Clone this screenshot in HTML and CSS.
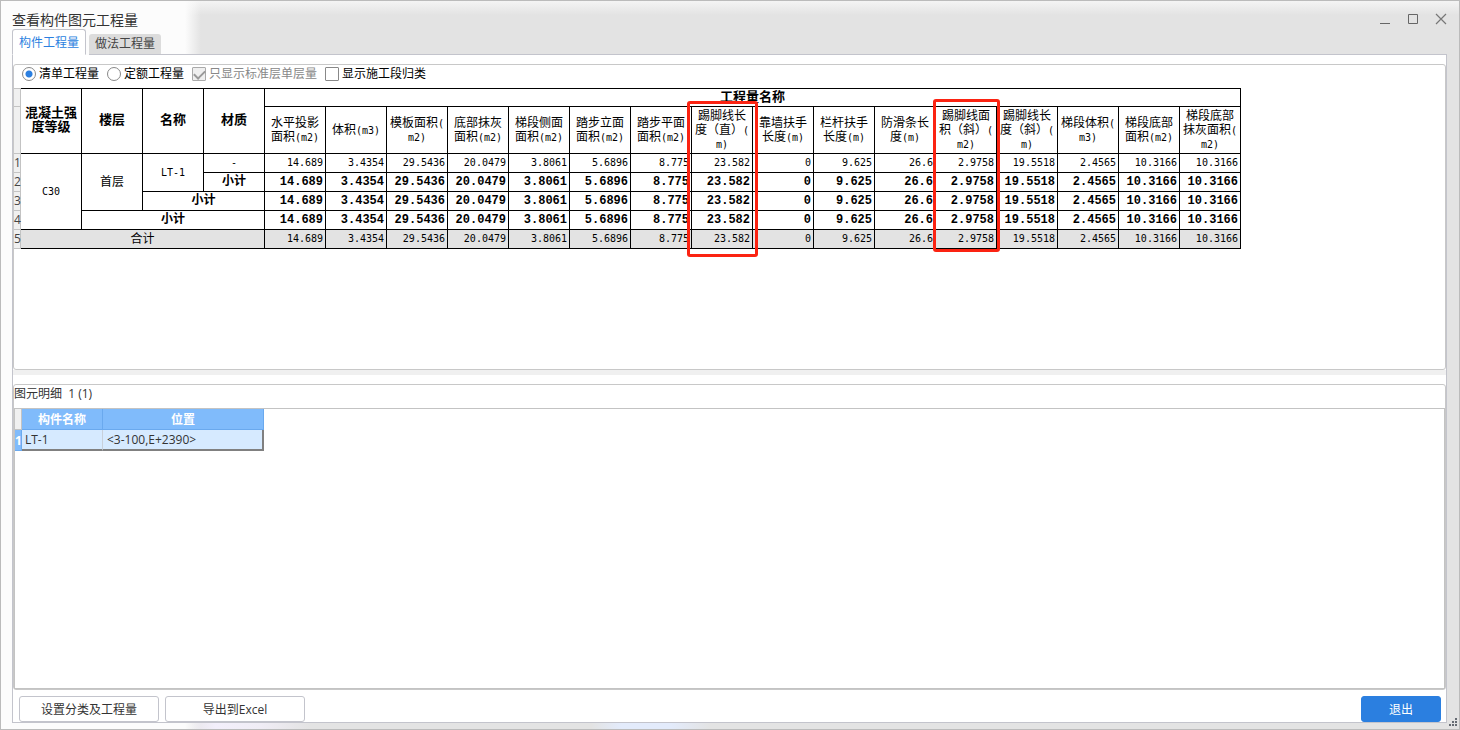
FILE: index.html
```html
<!DOCTYPE html>
<html lang="zh-CN">
<head>
<meta charset="utf-8">
<title>查看构件图元工程量</title>
<link rel="stylesheet" href="styles.css">
</head>
<body>
<div class="window">
  <header class="titlebar">
    <h1 class="title">查看构件图元工程量</h1>
    <div class="window-controls">
      <button class="control" type="button" aria-label="最小化"><svg viewBox="0 0 12 12" width="12" height="12"><path d="M1 10.500h10" fill="none" stroke="#666"/></svg></button>
      <button class="control" type="button" aria-label="最大化"><svg viewBox="0 0 12 12" width="12" height="12"><path d="M1.500 1.500h9v9h-9z" fill="none" stroke="#666"/></svg></button>
      <button class="control" type="button" aria-label="关闭"><svg viewBox="0 0 12 12" width="12" height="12"><path d="M1 1l10 10M11 1L1 11" fill="none" stroke="#777" stroke-width="1.200"/></svg></button>
    </div>
  </header>
  <nav class="tabs">
    <button class="tab tab-active" type="button">构件工程量</button>
    <button class="tab" type="button">做法工程量</button>
    <span class="tabs-line"></span>
  </nav>
  <main class="page">
    <section class="group quantities">
      <div class="options">
        <label class="option"><input class="radio" type="radio" name="mode" checked>清单工程量</label>
        <label class="option"><input class="radio" type="radio" name="mode">定额工程量</label>
        <label class="option option-disabled"><input class="check" type="checkbox" checked disabled>只显示标准层单层量</label>
        <label class="option"><input class="check" type="checkbox">显示施工段归类</label>
      </div>
      <div class="sheet">
        <table class="grid">
          <colgroup><col class="col-index"><col span="20" class="col-data"></colgroup>
          <thead>
            <tr class="row-top">
              <th class="index"></th>
              <th rowspan="2">混凝土强<br>度等级</th><th rowspan="2">楼层</th><th rowspan="2">名称</th><th rowspan="2">材质</th>
              <th class="group-name" colspan="16">工程量名称</th>
            </tr>
            <tr class="row-names">
              <th class="index"></th>
              <th>水平投影<br>面积<span class="unit">(m2)</span></th>
              <th>体积<span class="unit">(m3)</span></th>
              <th>模板面积<span class="unit">(<br>m2)</span></th>
              <th>底部抹灰<br>面积<span class="unit">(m2)</span></th>
              <th>梯段侧面<br>面积<span class="unit">(m2)</span></th>
              <th>踏步立面<br>面积<span class="unit">(m2)</span></th>
              <th>踏步平面<br>面积<span class="unit">(m2)</span></th>
              <th>踢脚线长<br>度（直）<span class="unit">(<br>m)</span></th>
              <th>靠墙扶手<br>长度<span class="unit">(m)</span></th>
              <th>栏杆扶手<br>长度<span class="unit">(m)</span></th>
              <th>防滑条长<br>度<span class="unit">(m)</span></th>
              <th>踢脚线面<br>积（斜）<span class="unit">(<br>m2)</span></th>
              <th>踢脚线长<br>度（斜）<span class="unit">(<br>m)</span></th>
              <th>梯段体积<span class="unit">(<br>m3)</span></th>
              <th>梯段底部<br>面积<span class="unit">(m2)</span></th>
              <th>梯段底部<br>抹灰面积<span class="unit">(<br>m2)</span></th>
            </tr>
          </thead>
          <tbody>
            <tr>
              <th class="index">1</th>
              <td class="key" rowspan="4">C30</td><td class="key key-cjk" rowspan="3">首层</td><td class="key" rowspan="2">LT-1</td><td class="key">-</td>
              <td>14.689</td><td>3.4354</td><td>29.5436</td><td>20.0479</td><td>3.8061</td><td>5.6896</td><td>8.775</td><td>23.582</td><td>0</td><td>9.625</td><td>26.6</td><td>2.9758</td><td>19.5518</td><td>2.4565</td><td>10.3166</td><td>10.3166</td>
            </tr>
            <tr class="subtotal">
              <th class="index">2</th>
              <td class="key">小计</td>
              <td>14.689</td><td>3.4354</td><td>29.5436</td><td>20.0479</td><td>3.8061</td><td>5.6896</td><td>8.775</td><td>23.582</td><td>0</td><td>9.625</td><td>26.6</td><td>2.9758</td><td>19.5518</td><td>2.4565</td><td>10.3166</td><td>10.3166</td>
            </tr>
            <tr class="subtotal">
              <th class="index">3</th>
              <td class="key" colspan="2">小计</td>
              <td>14.689</td><td>3.4354</td><td>29.5436</td><td>20.0479</td><td>3.8061</td><td>5.6896</td><td>8.775</td><td>23.582</td><td>0</td><td>9.625</td><td>26.6</td><td>2.9758</td><td>19.5518</td><td>2.4565</td><td>10.3166</td><td>10.3166</td>
            </tr>
            <tr class="subtotal">
              <th class="index">4</th>
              <td class="key" colspan="3">小计</td>
              <td>14.689</td><td>3.4354</td><td>29.5436</td><td>20.0479</td><td>3.8061</td><td>5.6896</td><td>8.775</td><td>23.582</td><td>0</td><td>9.625</td><td>26.6</td><td>2.9758</td><td>19.5518</td><td>2.4565</td><td>10.3166</td><td>10.3166</td>
            </tr>
            <tr class="total">
              <th class="index">5</th>
              <td class="key key-cjk" colspan="4">合计</td>
              <td>14.689</td><td>3.4354</td><td>29.5436</td><td>20.0479</td><td>3.8061</td><td>5.6896</td><td>8.775</td><td>23.582</td><td>0</td><td>9.625</td><td>26.6</td><td>2.9758</td><td>19.5518</td><td>2.4565</td><td>10.3166</td><td>10.3166</td>
            </tr>
          </tbody>
        </table>
        <span class="mark mark-straight"></span>
        <span class="mark mark-sloped"></span>
      </div>
    </section>
    <div class="splitter"></div>
    <section class="group details">
      <h2 class="details-title">图元明细&nbsp; 1 (1)</h2>
      <div class="details-body">
        <table class="elements">
          <colgroup><col class="col-index"><col class="col-name"><col class="col-place"></colgroup>
          <thead><tr><th class="corner"></th><th>构件名称</th><th>位置</th></tr></thead>
          <tbody><tr><th class="selected-index">1</th><td>LT-1</td><td>&lt;3-100,E+2390&gt;</td></tr></tbody>
        </table>
      </div>
    </section>
    <footer class="actions">
      <button class="button" type="button">设置分类及工程量</button>
      <button class="button" type="button">导出到Excel</button>
      <button class="button button-primary" type="button">退出</button>
    </footer>
  </main>
  <svg class="grip" viewBox="0 0 8 8" width="8" height="8"><path d="M6 0h2v2H6zM3 3h2v2H3zM6 3h2v2H6zM0 6h2v2H0zM3 6h2v2H3zM6 6h2v2H6z" fill="#666b73"/></svg>
</div>
</body>
</html>
```
FILE: styles.css
```css
* { box-sizing: border-box; }

body {
  margin: 0;
  font: 12px/16px "Open Sans", "Noto Sans CJK SC", sans-serif;
  color: #333;
}

button, input { font: inherit; margin: 0; }

.window {
  position: relative;
  display: flex;
  flex-direction: column;
  min-height: 100vh;
  padding: 0 12px 6px 11px;
  border: 1px solid #bbb;
  background:
    linear-gradient(90deg, #fcfcfc 184px, #e3e3e300 200px),
    linear-gradient(90deg, #e3e3e300 180px, #f3effb 215px, #f0edf5 260px, #e3e3e300 310px, #e3e3e300 590px, #e3ebfb 620px, #e3ebfb 670px, #e3e3e300 710px) bottom / 100% 8px no-repeat,
    linear-gradient(#f4f4f4, #e3e3e3 14px);
}

.titlebar {
  display: flex;
  justify-content: space-between;
  height: 28px;
}

.title {
  margin: 0;
  padding-top: 9px;
  font-size: 14px;
  line-height: 20px;
  font-weight: 400;
}

.window-controls {
  display: flex;
  gap: 16px;
  padding-top: 12px;
}

.control {
  width: 12px;
  height: 12px;
  padding: 0;
  border: 0;
  background: none;
}

.control svg { display: block; }

.tabs {
  display: flex;
  align-items: flex-end;
  height: 26px;
}

.tab {
  height: 21px;
  margin-left: 3px;
  padding: 0 6px;
  border: 0;
  border-radius: 3px 3px 0 0;
  background: #dcdcdc;
  color: #444;
  border-bottom: 1px solid #c3c4cc;
}

.tab-active {
  height: 26px;
  margin-left: 0;
  padding-top: 2px;
  border: 1px solid #c3c4cc;
  border-bottom-color: #fff;
  background: #fff;
  color: #2b7fe0;
}

.tabs-line {
  flex: 1;
  border-bottom: 1px solid #c3c4cc;
}

.page {
  flex: 1;
  display: flex;
  flex-direction: column;
  padding-top: 9px;
  border: solid #c3c4cc;
  border-width: 0 1px 1px;
  background: #fff;
}

.group {
  flex: 1 1 0;
  display: flex;
  flex-direction: column;
  border: 1px solid #c8c8c8;
  border-radius: 3px;
}

.options {
  display: flex;
  gap: 8px;
  padding: 1px 8px 0;
  height: 23px;
  align-items: flex-start;
  color: #000;
}

.option {
  display: flex;
  align-items: center;
  gap: 3px;
}

.option-disabled { color: #888; }

.radio, .check {
  appearance: none;
  width: 14px;
  height: 14px;
  border: 1px solid #888;
  background: #fff;
}

.radio { border-radius: 50%; }

.radio:checked { background: radial-gradient(circle, #2b7fe0 3px, #fff 4px); }

.check { border-radius: 1px; }

.check:disabled {
  border-color: #aaa;
  background: #efefef;
}

.check:checked::before {
  content: "";
  display: block;
  width: 9px;
  height: 5px;
  margin: 2px 1px;
  border: solid #999;
  border-width: 0 0 2px 2px;
  rotate: -45deg;
}

.sheet {
  position: relative;
  flex: 1;
}

.grid {
  table-layout: fixed;
  width: 1227px;
  border-spacing: 0;
  color: #000;
  line-height: 14px;
}

.col-index { width: 7px; }
.col-data { width: 61px; }

.grid th, .grid td {
  padding: 0;
  border: solid #000;
  border-width: 0 1px 1px 0;
  white-space: nowrap;
}

.grid .row-top th { border-top-width: 1px; }

.row-top { height: 19px; }

.grid .row-top th {
  padding-bottom: 4px;
  font-size: 13px;
}

.grid .row-top .group-name { line-height: 12px; }

.row-names { height: 47px; }

.row-names th { font-weight: 400; }

.unit { font: 10px/12px "DejaVu Sans Mono", monospace; }

.grid tbody tr { height: 19px; }

.grid td {
  padding-right: 2px;
  font: 10px/14px "DejaVu Sans Mono", "Noto Sans CJK SC", monospace;
  text-align: right;
}

.grid .key {
  padding: 0;
  text-align: center;
}

.grid .key-cjk { font-size: 12px; }

.grid .subtotal td {
  font: 700 12px/14px "Liberation Mono", "Noto Sans CJK SC", monospace;
}

.grid .total td { background: #e3e3e3; }

.grid .index {
  border-color: #c3c3c3;
  background: #f0f0f0;
  font-size: 12px;
  font-weight: 400;
  color: #444;
}

.mark {
  position: absolute;
  border: 3px solid #fb2312;
  border-radius: 3px;
}

.mark-straight {
  left: 673px;
  top: 13px;
  width: 71px;
  height: 156px;
}

.mark-sloped {
  left: 919px;
  top: 11px;
  width: 67px;
  height: 153px;
}

.splitter {
  height: 5px;
  margin-bottom: 9px;
  background: #f0f0f0;
}

.details-title {
  margin: 0;
  height: 23px;
  font-size: 12px;
  line-height: 18px;
  font-weight: 400;
}

.details-body {
  flex: 1;
  border: 1px solid #c3c3c3;
}

.elements {
  table-layout: fixed;
  width: 249px;
  border-spacing: 0;
  line-height: 18px;
}

.col-name { width: 81px; }
.col-place { width: 161px; }

.elements th {
  padding: 2px 0 0;
  height: 21px;
  border: solid #6aa9ee;
  border-width: 0 1px 1px 0;
  background: #80bbfb;
  color: #fff;
}

.elements .corner {
  border-color: #c3c3c3;
  background: #f0f0f0;
}

.elements td {
  padding: 1px 3px 0;
  height: 21px;
  border-bottom: 2px solid #808080;
  border-right: 1px solid #c8d0da;
  background: #d6eaff;
}

.elements td:last-child {
  padding-left: 4px;
  border-right: 2px solid #808080;
}

.actions {
  display: flex;
  gap: 6px;
  padding: 6px 5px 0 6px;
}

.button {
  width: 140px;
  height: 26px;
  padding: 2px 0 0;
  border: 1px solid #c3c4cc;
  border-radius: 3px;
  background: #fff;
  color: #333;
}

.button-primary {
  width: 80px;
  margin-left: auto;
  border-color: #2b7fe0;
  background: #2b7fe0;
  color: #fff;
}

.grip {
  position: absolute;
  right: 2px;
  bottom: 3px;
}
```
